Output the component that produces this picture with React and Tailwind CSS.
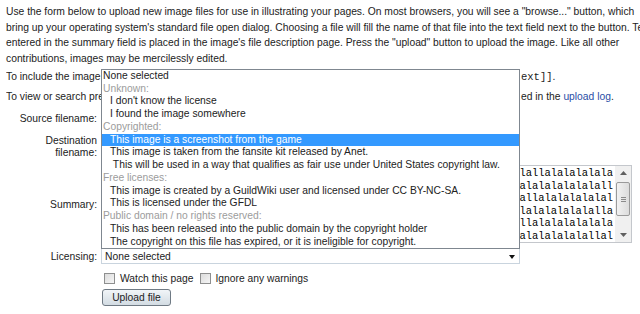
const para = [
  'Use the form below to upload new image files for use in illustrating your pages. On most browsers, you will see a "browse..." button, which',
  "bring up your operating system's standard file open dialog. Choosing a file will fill the name of that file into the text field next to the button. Text",
  "entered in the summary field is placed in the image's file description page. Press the \"upload\" button to upload the image. Like all other",
  'contributions, images may be mercilessly edited.',
];

const options = [
  { t: 'None selected', kind: 'first' },
  { t: 'Unknown:', kind: 'group' },
  { t: "I don't know the license" },
  { t: 'I found the image somewhere' },
  { t: 'Copyrighted:', kind: 'group' },
  { t: 'This image is a screenshot from the game', sel: true },
  { t: 'This image is taken from the fansite kit released by Anet.' },
  { t: '\u00a0This will be used in a way that qualifies as fair use under United States copyright law.' },
  { t: 'Free licenses:', kind: 'group' },
  { t: 'This image is created by a GuildWiki user and licensed under CC BY-NC-SA.' },
  { t: 'This is licensed under the GFDL' },
  { t: 'Public domain / no rights reserved:', kind: 'group' },
  { t: 'This has been released into the public domain by the copyright holder' },
  { t: 'The copyright on this file has expired, or it is ineligible for copyright.' },
];

const pre = 'lalalallalalalalalallalalalalalalalallalalalalalalalalalala';
const taLines = [
  pre + 'lallalalalalala',
  pre + 'alalalalalalall',
  pre + 'allalalalalalal',
  pre + 'lalalalalalalla',
  pre + 'llalalalalalala',
  pre + 'alalalalalallal',
];

function Checkbox() {
  return (
    <span className="inline-block w-[11px] h-[11px] border border-[#8e8f8f] bg-gradient-to-br from-[#dcdcdc] to-[#f6f6f6] shrink-0" />
  );
}

export default function App() {
  return (
    <div className="relative w-[640px] h-[314px] overflow-hidden bg-white text-[#222] text-[10.3px] font-['Liberation_Sans',Arial,sans-serif]">
      <div className="pl-[6px] pt-[4px] leading-[15.7px]">
        {para.map((l, i) => (
          <div key={i} className="whitespace-nowrap">{l}</div>
        ))}
      </div>

      <div className="pl-[6px] leading-[20px]">
        <div className="flex whitespace-nowrap h-[20px]">
          <span className="w-[515px] shrink-0 overflow-hidden">
            To include the image in a page, use a link in the form [[Image:File.jpg]] or [[Image:File.png|alt t
          </span>
          <span className="font-['Liberation_Mono',monospace] text-[10.5px]">ext]]</span>
          <span>.</span>
        </div>
        <div className="flex whitespace-nowrap h-[20px]">
          <span className="w-[515px] shrink-0 overflow-hidden">
            To view or search previously uploaded images go to the list of uploaded images. Uploads and deletions are logg
          </span>
          <span>ed in the&nbsp;</span>
          <a className="text-[#2a4ea6]">upload log</a>
          <span>.</span>
        </div>
      </div>

      <div className="flex flex-col">
        <div className="flex items-center h-[24px]">
          <div className="w-[97px] text-right whitespace-nowrap">Source filename:</div>
          <div className="ml-[4px] w-[419px] h-[18px] border border-[#abadb3]" />
        </div>
        <div className="flex items-center h-[33px]">
          <div className="w-[97px] text-right leading-[12px]">
            <div>Destination</div>
            <div>filename:</div>
          </div>
          <div className="ml-[4px] w-[419px] h-[18px] border border-[#abadb3]" />
        </div>
        <div className="flex items-center h-[78px] mt-[1.5px]">
          <div className="w-[97px] text-right">Summary:</div>
          <div className="ml-[4px] w-[531px] h-[78px] shrink-0 border border-[#c4c7cc] flex">
            <div className="flex-1 min-w-0 overflow-hidden pt-[1px] pr-[2px] text-black font-['Liberation_Mono',monospace] text-[10.4px] leading-[12.5px]">
              {taLines.map((l, i) => (
                <div key={i} className="flex justify-end whitespace-nowrap overflow-hidden h-[12.5px]">
                  <span className="shrink-0">{l}</span>
                </div>
              ))}
            </div>
            <div className="w-[16px] bg-[#f0f0f0] flex flex-col items-center">
              <div className="h-[14px] flex items-center justify-center">
                <svg width="7" height="4" viewBox="0 0 7 4"><path d="M0 4 L3.5 0 L7 4Z" fill="#606060" /></svg>
              </div>
              <div className="mt-[2px] w-[14px] h-[34px] rounded-[2px] border border-[#9a9a9a] bg-gradient-to-r from-[#f2f2f2] to-[#dcdcdc] flex flex-col items-center justify-center gap-[1px]">
                <span className="block w-[5px] h-px bg-[#8a8a8a]" />
                <span className="block w-[5px] h-px bg-[#8a8a8a]" />
                <span className="block w-[5px] h-px bg-[#8a8a8a]" />
              </div>
              <div className="flex-1" />
              <div className="h-[14px] flex items-center justify-center">
                <svg width="7" height="4" viewBox="0 0 7 4"><path d="M0 0 L3.5 4 L7 0Z" fill="#606060" /></svg>
              </div>
            </div>
          </div>
        </div>
        <div className="flex items-center mt-[5px] h-[16px]">
          <div className="w-[97px] text-right">Licensing:</div>
          <div className="relative ml-[4px] w-[419px] h-[16px] border border-[#c9d4de] bg-white flex items-center pl-[3px]">
            <span>None selected</span>
            <svg className="absolute right-[4px] top-[6px]" width="6" height="4" viewBox="0 0 6 4"><path d="M0 0 L3 4 L6 0Z" fill="#111" /></svg>
            <div className="absolute -left-px -right-px bottom-full bg-white border border-[#7f8790] leading-[12.75px]">
              {options.map((o, i) => (
                <div
                  key={i}
                  className={
                    'h-[12.75px] whitespace-nowrap overflow-hidden ' +
                    (o.kind === 'group'
                      ? 'pl-[1px] text-[#9c9c9c]'
                      : o.kind === 'first'
                      ? 'pl-[1px]'
                      : o.sel
                      ? 'pl-[8px] bg-[#3399ff] text-white'
                      : 'pl-[8px]')
                  }
                >
                  {o.t}
                </div>
              ))}
            </div>
          </div>
        </div>
        <div className="flex items-center h-[15px] mt-[7px] pl-[104px]">
          <Checkbox />
          <span className="ml-[5px]">Watch this page</span>
          <span className="ml-[7px] flex"><Checkbox /></span>
          <span className="ml-[4px]">Ignore any warnings</span>
        </div>
        <div className="pl-[102px] mt-[3px]">
          <button className="w-[69px] h-[17px] rounded-[3px] border border-[#6f7a84] bg-gradient-to-b from-[#f1f5f8] to-[#d3dce3] text-[10.3px] leading-[15px] text-[#222]">
            Upload file
          </button>
        </div>
      </div>
    </div>
  );
}
